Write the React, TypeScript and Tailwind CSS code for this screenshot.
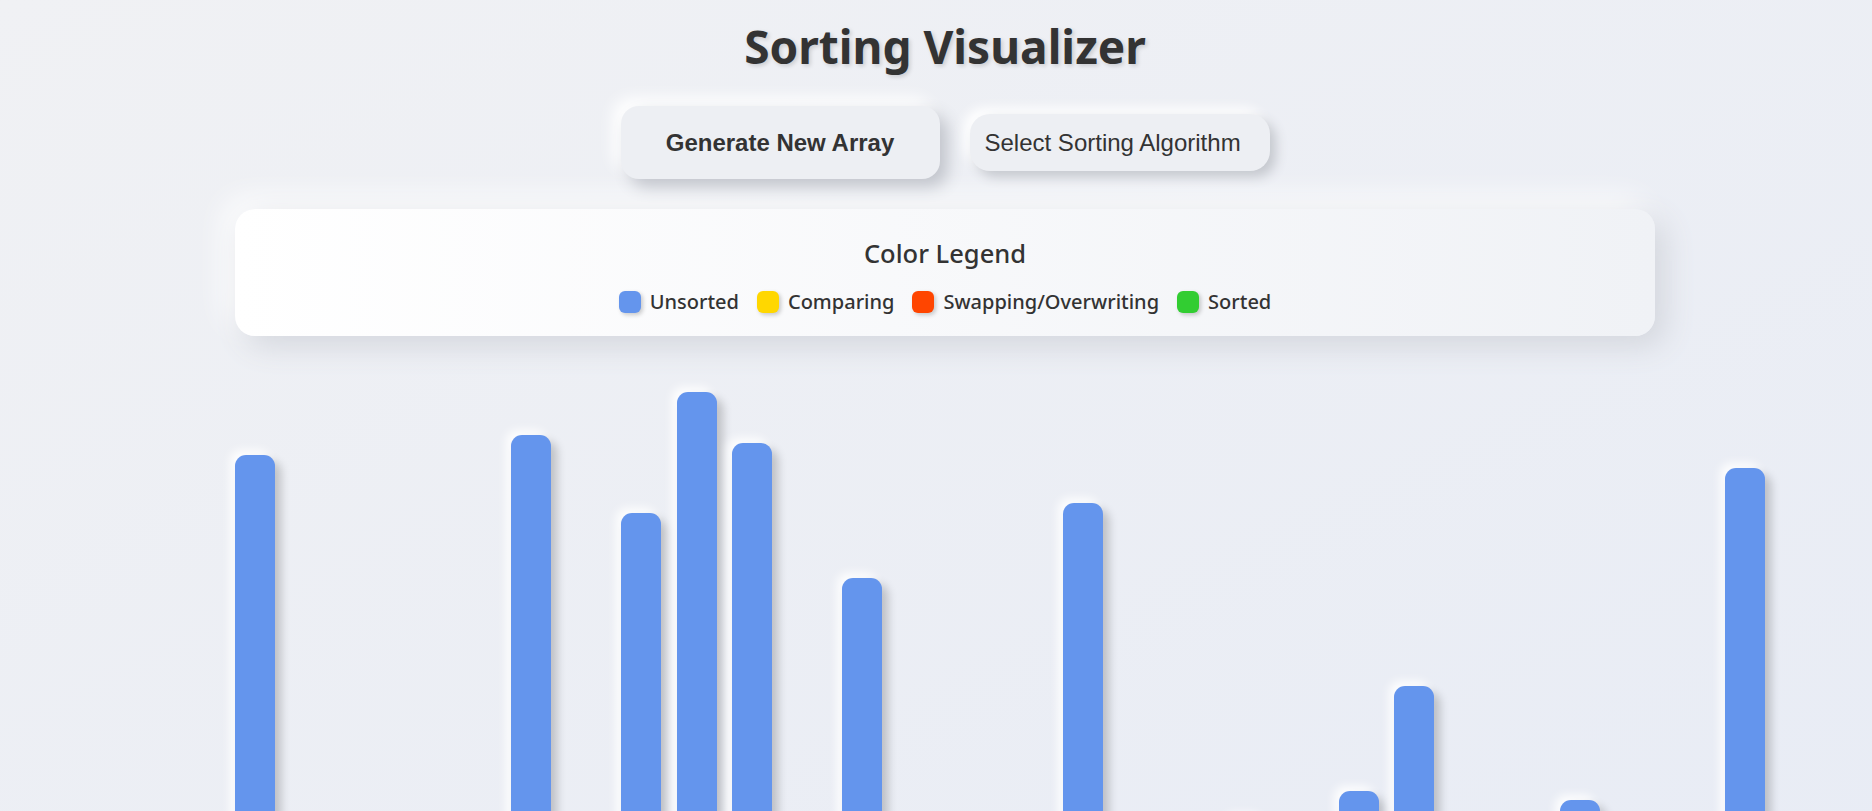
import React from "react";

const bars = [
  445, 40, 55, 25, 60, 465, 35, 387, 508, 457, 50, 322, 30, 45, 20, 397, 38,
  52, 82, 28, 109, 214, 42, 33, 100, 48, 26, 432,
];

const legend = [
  { label: "Unsorted", color: "bg-[#6495ed]" },
  { label: "Comparing", color: "bg-[#ffd700]" },
  { label: "Swapping/Overwriting", color: "bg-[#ff4500]" },
  { label: "Sorted", color: "bg-[#32cd32]" },
];

export default function App() {
  return (
    <div className="min-h-screen overflow-hidden bg-linear-to-br from-[#f0f1f4] to-[#e8ecf5] pl-[18px] font-['Noto_Sans',sans-serif] text-[#333]">
      <h1 className="pt-[14px] text-center text-[46px] font-bold leading-[64px] [text-shadow:2px_2px_4px_rgba(0,0,0,0.15)]">
        Sorting Visualizer
      </h1>

      <div className="mt-[28px] flex items-center justify-center gap-[30px] font-['Liberation_Sans',Arial,sans-serif]">
        <button className="h-[73px] w-[319px] rounded-[18px] bg-[#edeff3] text-[24px] font-bold text-[#333] shadow-[8px_8px_16px_#c2c5cc,-8px_-8px_16px_#ffffff]">
          Generate New Array
        </button>
        <select
          className="h-[57px] w-[300px] appearance-none rounded-[20px] bg-[#edeff3] pl-[15px] text-[24px] text-[#333] shadow-[6px_6px_12px_#c5c8ce,-6px_-6px_12px_#ffffff] outline-none"
          defaultValue=""
        >
          <option value="">Select Sorting Algorithm</option>
          <option value="bubble">Bubble Sort</option>
          <option value="merge">Merge Sort</option>
          <option value="quick">Quick Sort</option>
        </select>
      </div>

      <div className="mx-auto mt-[30px] flex h-[127px] w-[1420px] flex-col items-center rounded-[20px] bg-linear-to-r from-white to-[#f0f2f6] pt-[25px] shadow-[10px_10px_30px_#d3d6dd,-10px_-10px_30px_#ffffff]">
        <h2 className="text-[25.5px] font-medium leading-normal">Color Legend</h2>
        <div className="mt-[15px] flex items-center gap-[18px]">
          {legend.map((item) => (
            <div key={item.label} className="flex items-center gap-[9px]">
              <span
                className={`h-[22px] w-[22px] rounded-[6px] ${item.color} shadow-[2px_2px_4px_rgba(0,0,0,0.2)]`}
              />
              <span className="text-[20px] font-medium leading-normal">
                {item.label}
              </span>
            </div>
          ))}
        </div>
      </div>

      <div className="mx-auto mt-[40px] flex h-[524px] w-[1420px] items-end gap-[15.2px]">
        {bars.map((h, i) => (
          <div
            key={i}
            className="w-[40px] shrink-0 rounded-t-[11px] bg-[#6495ed] shadow-[6px_6px_10px_rgba(0,0,0,0.2),-5px_-5px_10px_rgba(255,255,255,0.9)]"
            style={{ height: h }}
          />
        ))}
      </div>
    </div>
  );
}
